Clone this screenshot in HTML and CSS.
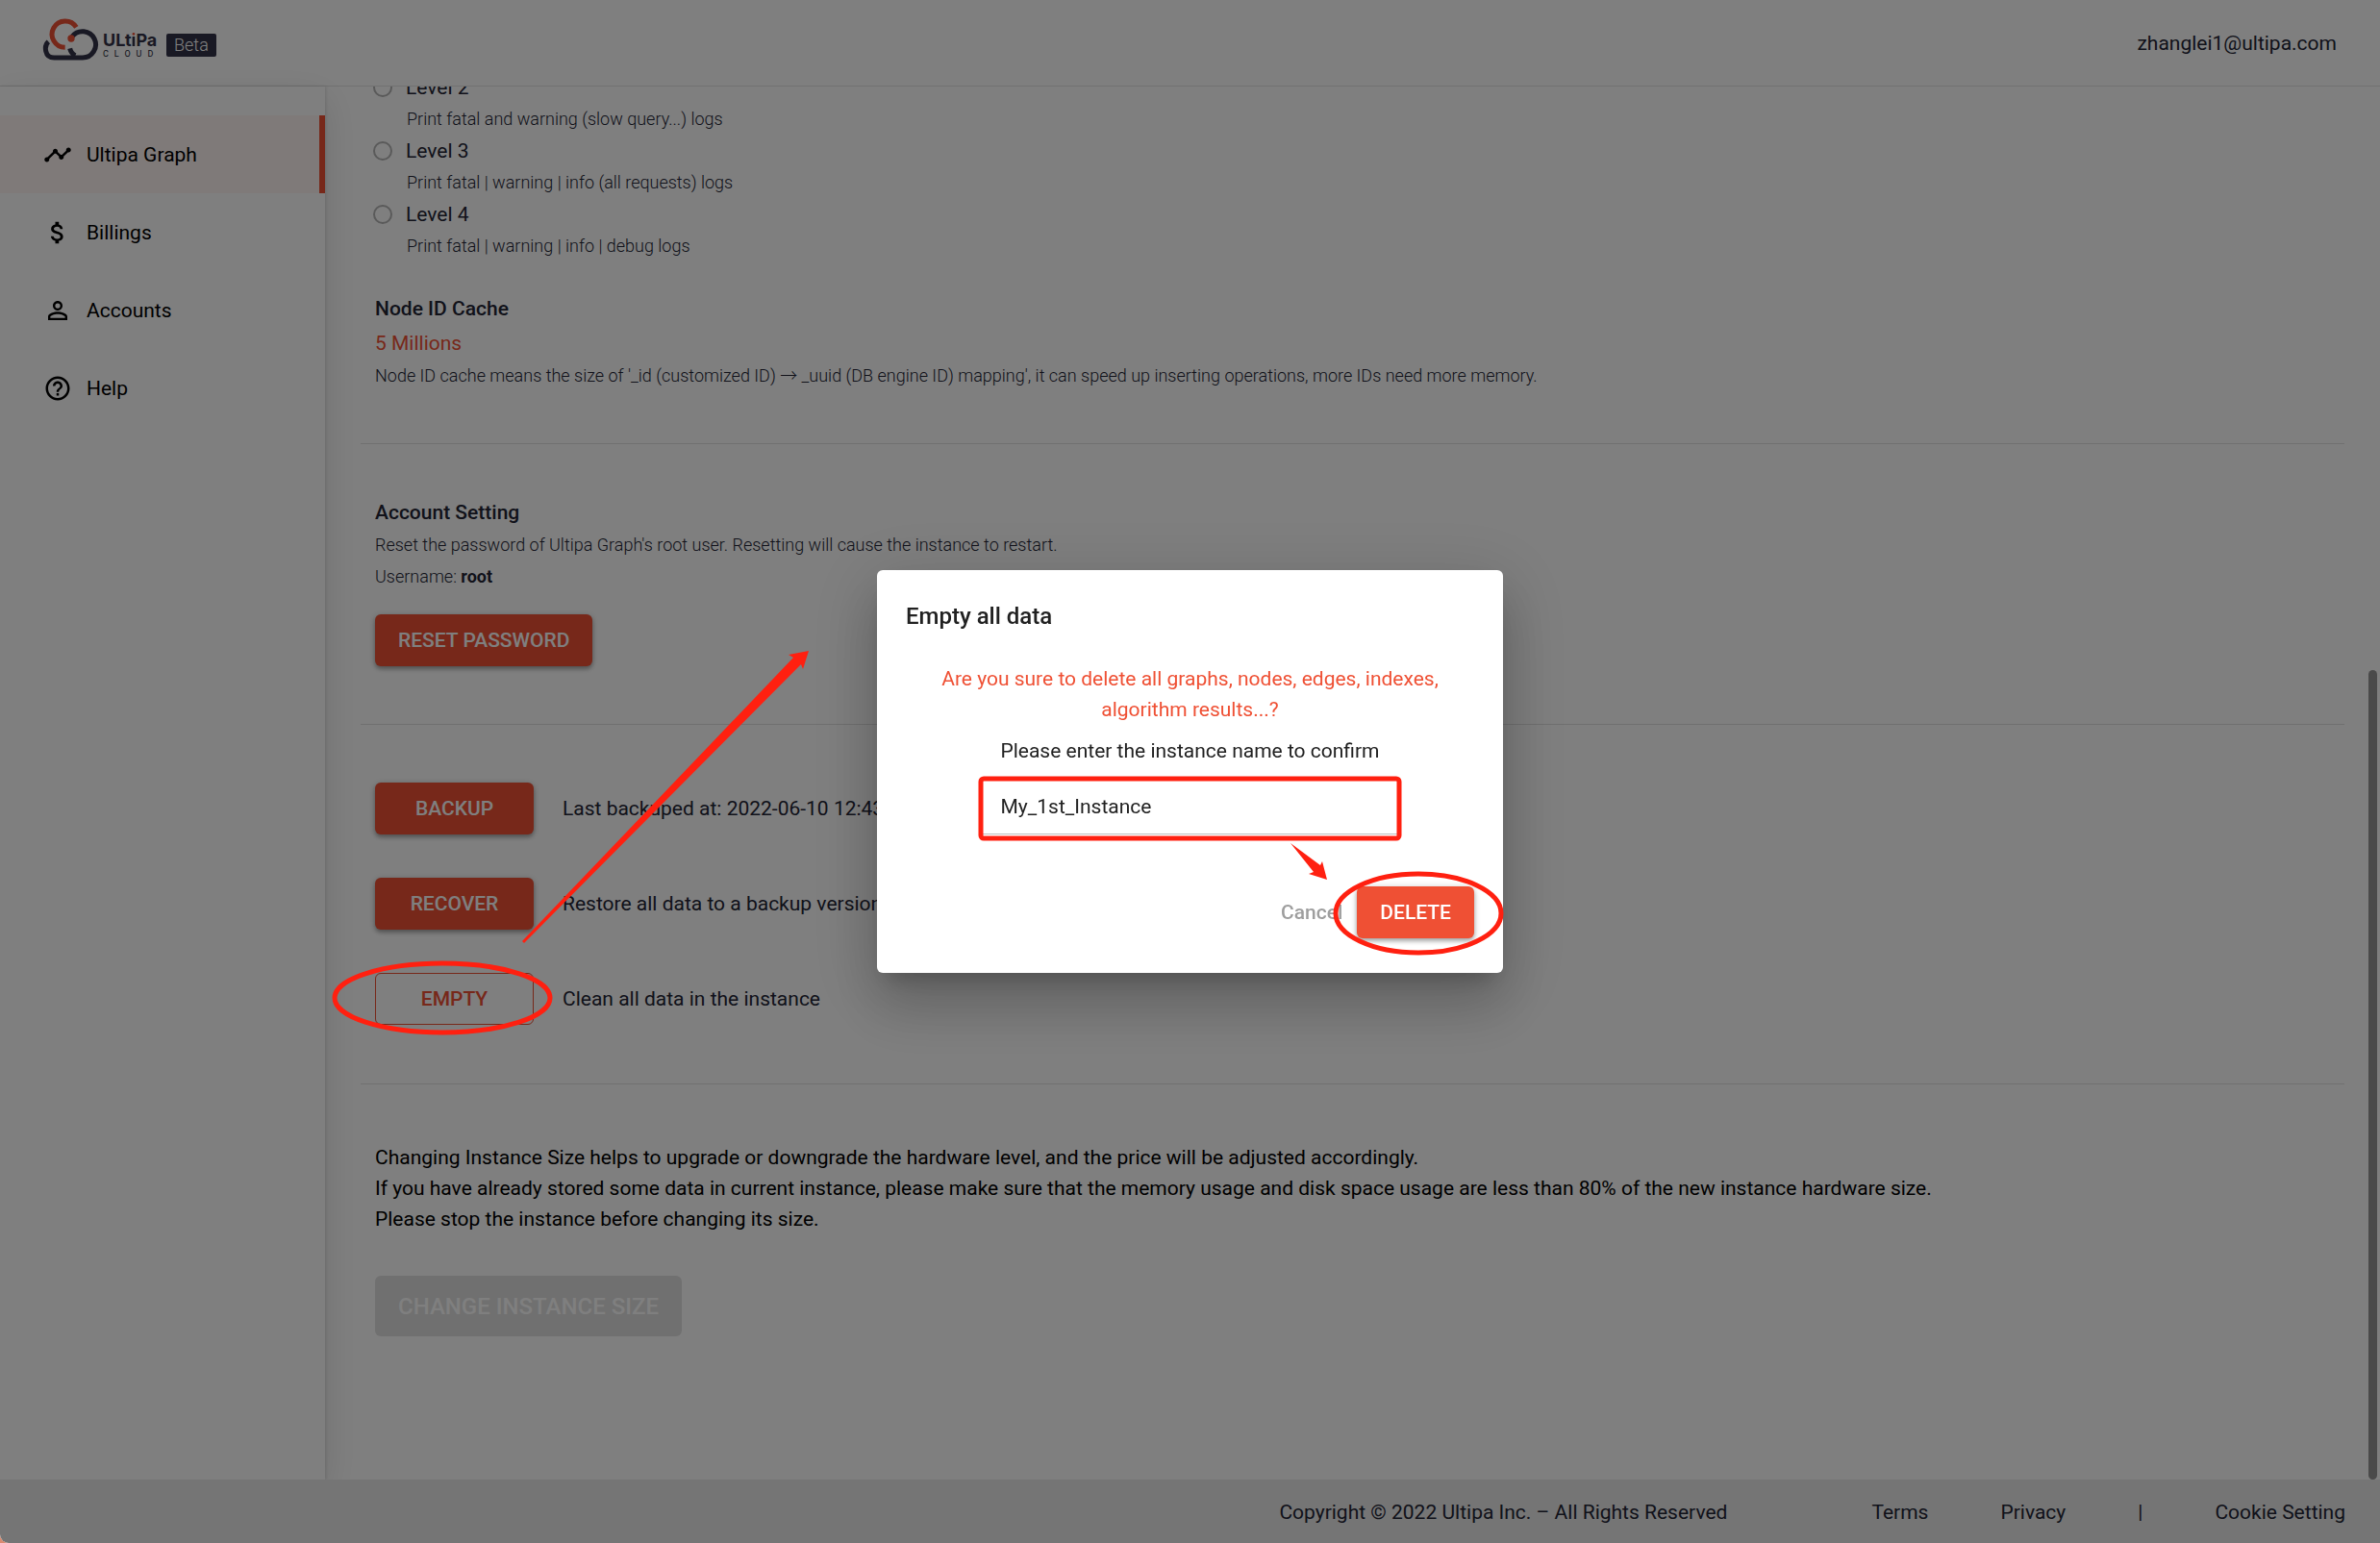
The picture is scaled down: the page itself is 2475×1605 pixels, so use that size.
FILE: index.html
```html
<!DOCTYPE html>
<html lang="en">
<head>
  <meta charset="UTF-8">
  <meta name="viewport" content="width=device-width, initial-scale=1.0">
  <title>Ultipa Cloud</title>
  <link rel="stylesheet" href="styles.css">
</head>
<body>
  <div class="app">
    <header class="header">
      <a class="logo" href="#">
        <svg class="logo-mark" viewBox="130 55 180 141" fill="none" stroke-width="15">
          <path stroke="#333248" d="M152 131C138 143 139 181 170 181H258A41 41 0 1 0 226 115M219 152Q223 168 236 174"/>
          <path stroke="#ef5034" d="M239 86A41 41 0 1 0 204 149"/>
          <circle cx="223" cy="121" r="11" fill="#ef5034"/>
        </svg>
        <span class="logo-text">
          <span class="logo-name">ULt<span class="logo-i">i</span>Pa</span>
          <span class="logo-sub">CLOUD</span>
        </span>
        <span class="beta">Beta</span>
      </a>
      <a class="user" href="#">zhanglei1@ultipa.com</a>
    </header>

    <div class="layout">
      <nav class="sidebar">
        <a class="nav-item active" href="#">
          <svg viewBox="0 0 24 24"><path d="M23 8c0 1.1-.9 2-2 2-.18 0-.35-.02-.51-.07l-3.56 3.55c.05.16.07.34.07.52 0 1.1-.9 2-2 2s-2-.9-2-2c0-.18.02-.36.07-.52l-2.55-2.55c-.16.05-.34.07-.52.07s-.36-.02-.52-.07l-4.55 4.56c.05.16.07.33.07.51 0 1.1-.9 2-2 2s-2-.9-2-2 .9-2 2-2c.18 0 .35.02.51.07l4.56-4.55C8.02 9.36 8 9.18 8 9c0-1.1.9-2 2-2s2 .9 2 2c0 .18-.02.36-.07.52l2.55 2.55c.16-.05.34-.07.52-.07s.36.02.52.07l3.55-3.56C19.02 8.35 19 8.18 19 8c0-1.1.9-2 2-2s2 .9 2 2z"/></svg>
          Ultipa Graph
        </a>
        <a class="nav-item" href="#">
          <svg viewBox="0 0 24 24"><path d="M11.8 10.9c-2.27-.59-3-1.2-3-2.15 0-1.09 1.01-1.85 2.7-1.85 1.78 0 2.44.85 2.5 2.1h2.21c-.07-1.72-1.12-3.3-3.21-3.81V3h-3v2.16c-1.94.42-3.5 1.68-3.5 3.61 0 2.31 1.91 3.46 4.7 4.13 2.5.6 3 1.48 3 2.41 0 .69-.49 1.79-2.7 1.79-2.06 0-2.87-.92-2.98-2.1h-2.2c.12 2.19 1.76 3.42 3.68 3.83V21h3v-2.15c1.95-.37 3.5-1.5 3.5-3.55 0-2.84-2.43-3.81-4.7-4.4z"/></svg>
          Billings
        </a>
        <a class="nav-item" href="#">
          <svg viewBox="0 0 24 24"><path d="M12 5.9a2.1 2.1 0 1 1 0 4.2 2.1 2.1 0 0 1 0-4.2m0 9c2.97 0 6.1 1.46 6.1 2.1v1.1H5.9V17c0-.64 3.13-2.1 6.1-2.1M12 4C9.79 4 8 5.79 8 8s1.79 4 4 4 4-1.79 4-4-1.79-4-4-4zm0 9c-2.67 0-8 1.34-8 4v3h16v-3c0-2.66-5.33-4-8-4z"/></svg>
          Accounts
        </a>
        <a class="nav-item" href="#">
          <svg viewBox="0 0 24 24"><path d="M11 18h2v-2h-2v2zm1-16C6.48 2 2 6.48 2 12s4.48 10 10 10 10-4.48 10-10S17.52 2 12 2zm0 18c-4.41 0-8-3.59-8-8s3.59-8 8-8 8 3.59 8 8-3.59 8-8 8zm0-14c-2.21 0-4 1.79-4 4h2c0-1.1.9-2 2-2s2 .9 2 2c0 2-3 1.75-3 5h2c0-2.25 3-2.5 3-5 0-2.21-1.79-4-4-4z"/></svg>
          Help
        </a>
      </nav>

      <main class="content">
        <section class="section logs">
          <label class="level"><input type="radio" name="level">Level 2</label>
          <p class="level-hint">Print fatal and warning (slow query...) logs</p>
          <label class="level"><input type="radio" name="level">Level 3</label>
          <p class="level-hint">Print fatal | warning | info (all requests) logs</p>
          <label class="level"><input type="radio" name="level">Level 4</label>
          <p class="level-hint">Print fatal | warning | info | debug logs</p>
          <div class="setting">
            <h3>Node ID Cache</h3>
            <p class="value">5 Millions</p>
            <p class="hint">Node ID cache means the size of '_id (customized ID) <span class="arrow">→</span> _uuid (DB engine ID) mapping', it can speed up inserting operations, more IDs need more memory.</p>
          </div>
        </section>

        <section class="section">
          <div class="setting">
            <h3>Account Setting</h3>
            <p class="hint">Reset the password of Ultipa Graph's root user. Resetting will cause the instance to restart.</p>
            <p class="hint">Username: <b>root</b></p>
          </div>
          <button class="btn reset" type="button">RESET PASSWORD</button>
        </section>

        <section class="section actions">
          <div class="action"><button class="btn" type="button">BACKUP</button><span>Last backuped at: 2022-06-10 12:43</span></div>
          <div class="action"><button class="btn" type="button">RECOVER</button><span>Restore all data to a backup version</span></div>
          <div class="action"><button class="btn outline" type="button">EMPTY</button><span>Clean all data in the instance</span></div>
        </section>

        <section class="section resize">
          <p>Changing Instance Size helps to upgrade or downgrade the hardware level, and the price will be adjusted accordingly.</p>
          <p>If you have already stored some data in current instance, please make sure that the memory usage and disk space usage are less than 80% of the new instance hardware size.</p>
          <p>Please stop the instance before changing its size.</p>
          <button class="btn large" type="button" disabled>CHANGE INSTANCE SIZE</button>
        </section>
        <div class="scroll-thumb"></div>
      </main>
    </div>

    <footer class="footer">
      <span class="copyright">Copyright © 2022 Ultipa Inc. – All Rights Reserved</span>
      <a href="#">Terms</a>
      <a href="#">Privacy</a>
      <span>|</span>
      <a href="#">Cookie Setting</a>
    </footer>

    <div class="overlay">
      <form class="dialog" role="dialog" aria-labelledby="dialogTitle">
        <h2 id="dialogTitle">Empty all data</h2>
        <p class="warning">Are you sure to delete all graphs, nodes, edges, indexes, algorithm results...?</p>
        <div class="field">
          <label for="instanceName">Please enter the instance name to confirm</label>
          <input type="text" id="instanceName" value="My_1st_Instance">
        </div>
        <div class="dialog-actions">
          <button class="cancel" type="button">Cancel</button>
          <button class="btn" type="button">DELETE</button>
        </div>
      </form>
    </div>
  </div>

  <!-- Red marks that lead through the steps -->
  <svg class="marks" viewBox="0 0 2475 1605">
    <g fill="none" stroke="#ff2010" stroke-width="5">
      <ellipse cx="460" cy="1038" rx="112" ry="36"/>
      <rect x="1020" y="810" width="435" height="62" rx="3"/>
      <ellipse cx="1475" cy="950" rx="86" ry="41"/>
    </g>
    <g fill="#ff2010">
      <path d="M543 979L825 684L820 681L841 677L835 696L833 691L545 981Z"/>
      <path d="M1342 877L1373 900L1375 896L1380 915L1361 909L1366 907Z"/>
    </g>
  </svg>
</body>
</html>
```
FILE: styles.css
```css
* { box-sizing: border-box; margin: 0; padding: 0; }
body {
  font-family: Roboto, sans-serif; font-size: 21px; color: #222434;
  background: #d98a70;
}
a { color: inherit; text-decoration: none; }
button, input { font: inherit; }

.app {
  height: 100vh; display: flex; flex-direction: column;
  background: #fff; border-bottom-left-radius: 9px; overflow: hidden;
}

/* Header */
.header {
  height: 90px; flex: none; padding: 0 45px 0 43px;
  display: flex; align-items: center; justify-content: space-between;
  border-bottom: 1px solid #e4e4e4;
}
.logo { display: flex; align-items: center; padding-bottom: 6px; }
.logo-mark { width: 60px; height: 47px; }
.logo-text { display: flex; flex-direction: column; margin: 10px 0 0 4px; width: 66px; }
.logo-name { font: 700 18px/18px Inter, sans-serif; color: #333248; }
.logo-i {
  background: linear-gradient(#ef5034 7px, #333248 7px);
  -webkit-background-clip: text; background-clip: text; color: transparent;
}
.logo-sub { font-size: 9px; line-height: 10px; letter-spacing: 6px; }
.beta {
  height: 24px; line-height: 24px; padding: 0 8px; margin-top: 10px;
  background: #333248; color: #fff; font-size: 18px; font-weight: 300; border-radius: 2px;
}

/* Layout */
.layout { flex: 1; min-height: 0; display: flex; }
.sidebar {
  width: 338px; flex: none; padding-top: 30px;
  box-shadow: 0 12px 36px rgba(0,0,0,0.12), 1px 0 3px rgba(0,0,0,0.12);
}
.nav-item {
  height: 81px; padding-left: 45px; color: #000;
  display: flex; align-items: center; gap: 15px;
}
.nav-item svg { width: 30px; height: 30px; }
.nav-item.active { background: #fef4f2; border-right: 6px solid #ef5034; }

/* Content */
.content { flex: 1; min-width: 0; padding: 0 37px; overflow: hidden; position: relative; }
.section { padding: 60px 15px; border-bottom: 1px solid #e0e0e0; }
.section:last-of-type { border-bottom: 0; }
.logs { padding-top: 0; margin-top: -16px; }
.level { height: 33px; display: flex; align-items: center; gap: 14px; margin-left: -2px; }
.level input {
  appearance: none; width: 20px; height: 20px;
  border: 2px solid #b4b4b4; border-radius: 50%;
}
.level-hint { font-size: 18px; font-weight: 300; line-height: 33px; padding-left: 33px; }
.setting { display: flex; flex-direction: column; gap: 13px; }
.logs .setting { margin-top: 38px; }
.logs h3 { margin-bottom: 1px; }
h3 { font-size: 21px; font-weight: 500; line-height: 22px; }
.value { color: #ef5034; line-height: 22px; }
.hint { font-size: 18px; font-weight: 300; line-height: 20px; }
.hint b { font-weight: 700; }
.arrow { font-family: "Noto Sans CJK SC", sans-serif; line-height: 0; }

.btn {
  height: 54px; padding: 0 24px; border: 0; border-radius: 6px;
  background: #ef5034; color: #fff; font-weight: 500;
  box-shadow: 0 3px 4px rgba(0,0,0,0.25), 0 1px 7px rgba(0,0,0,0.2);
  cursor: pointer;
}
.btn.outline { background: none; color: #ef5034; border: 1px solid #ef5034; box-shadow: none; }
.btn.large { height: 63px; font-size: 24px; margin-top: 43px; display: block; }
.btn:disabled { background: #e0e0e0; color: #fff; box-shadow: none; }
.reset { margin-top: 29px; display: block; }
.actions { display: flex; flex-direction: column; gap: 45px; padding-bottom: 61px; }
.action { display: flex; align-items: center; gap: 30px; white-space: nowrap; }
.action .btn { width: 165px; }
.resize { line-height: 32px; color: #000; }
.scroll-thumb {
  position: absolute; right: 3px; bottom: 0; width: 9px; height: 842px;
  background: #949494; border-radius: 5px;
}

/* Footer */
.footer {
  height: 66px; flex: none; padding: 2px 36px 0; background: #ebebeb;
  display: flex; align-items: center; justify-content: flex-end; gap: 75px;
}
.copyright { margin-right: 75px; }

/* Dialog */
.overlay {
  position: fixed; inset: 0; background: rgba(0,0,0,0.5);
  display: flex; align-items: center; justify-content: center;
  border-bottom-left-radius: 9px;
}
.dialog {
  width: 651px; padding: 30px 30px 36px; background: #fff; color: #212121; border-radius: 6px;
  box-shadow: 0 16px 22px -10px rgba(0,0,0,0.2), 0 36px 57px 4px rgba(0,0,0,0.14), 0 14px 69px 12px rgba(0,0,0,0.12);
}
.dialog h2 { font-size: 24px; font-weight: 500; line-height: 36px; }
.warning { margin: 31px 30px 0; text-align: center; color: #ef5034; line-height: 32px; }
.field { width: 432px; margin: 11px auto 0; padding: 0 0 2px; display: flex; flex-direction: column; }
.field label { line-height: 32px; text-align: center; }
.field input {
  height: 58px; margin-top: 13px; padding: 0 19px; background: none; color: inherit;
  border: 0; border-bottom: 1px solid #bdbdbd; outline: 0;
}
.dialog-actions { display: flex; align-items: center; justify-content: flex-end; gap: 15px; margin-top: 52px; }
.cancel { border: 0; background: none; color: #9e9e9e; font-weight: 500; cursor: pointer; }

.marks { position: absolute; top: 0; left: 0; width: 100%; pointer-events: none; }
```
